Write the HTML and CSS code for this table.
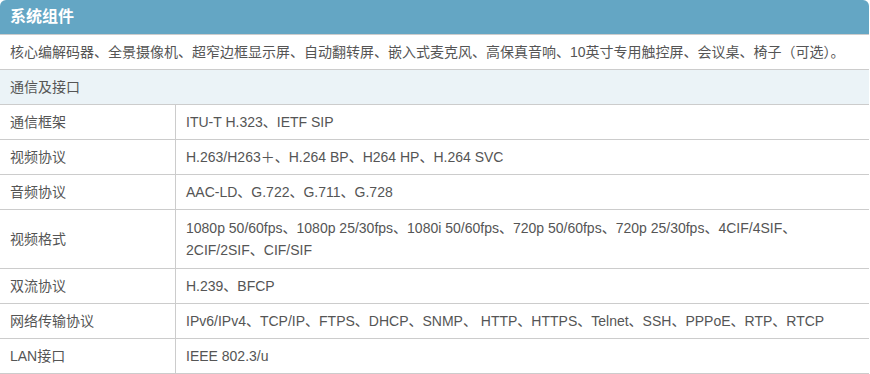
FILE: index.html
```html
<!DOCTYPE html>
<html lang="zh-CN">
<head>
<meta charset="utf-8">
<link rel="stylesheet" href="styles.css">
</head>
<body>
<div class="panel">
  <div class="panel-head">系统组件</div>
  <div class="summary">核心编解码器、全景摄像机、超窄边框显示屏、自动翻转屏、嵌入式麦克风、高保真音响、10英寸专用触控屏、会议桌、椅子（可选）。</div>
  <div class="section">通信及接口</div>
  <table class="spec">
    <tr><td class="k">通信框架</td><td class="v">ITU-T H.323、IETF SIP</td></tr>
    <tr><td class="k">视频协议</td><td class="v">H.263/H263＋、H.264 BP、H264 HP、H.264 SVC</td></tr>
    <tr><td class="k">音频协议</td><td class="v">AAC-LD、G.722、G.711、G.728</td></tr>
    <tr class="tall"><td class="k">视频格式</td><td class="v">1080p 50/60fps、1080p 25/30fps、1080i 50/60fps、720p 50/60fps、720p 25/30fps、4CIF/4SIF、<br>2CIF/2SIF、CIF/SIF</td></tr>
    <tr><td class="k">双流协议</td><td class="v">H.239、BFCP</td></tr>
    <tr><td class="k">网络传输协议</td><td class="v">IPv6/IPv4、TCP/IP、FTPS、DHCP、SNMP、 HTTP、HTTPS、Telnet、SSH、PPPoE、RTP、RTCP</td></tr>
    <tr><td class="k">LAN接口</td><td class="v">IEEE 802.3/u</td></tr>
  </table>
</div>
</body>
</html>
```
FILE: styles.css
```css
html, body {
  margin: 0;
  padding: 0;
  background: #ffffff;
}
body {
  font-family: "Liberation Sans", "Noto Sans CJK SC", sans-serif;
  font-size: 14px;
  color: #555555;
}
.panel {
  width: 869px;
}
.panel-head {
  height: 34px;
  line-height: 34px;
  background: #64a6c4;
  color: #ffffff;
  font-size: 16px;
  font-weight: bold;
  padding-left: 10px;
  border-radius: 6px 6px 0 0;
}
.summary {
  height: 34px;
  line-height: 34px;
  padding-left: 10px;
  border-top: 1px solid #cccccc;
  border-bottom: 1px solid #cccccc;
  white-space: nowrap;
}
.section {
  height: 34px;
  line-height: 34px;
  padding-left: 10px;
  background: #ebf3f7;
  border-bottom: 1px solid #cccccc;
}
.spec {
  width: 100%;
  border-collapse: collapse;
}
.spec td {
  border-bottom: 1px solid #cccccc;
  height: 34px;
  padding: 0 10px;
  line-height: 22px;
  vertical-align: middle;
}
.spec td.k {
  width: 155px;
  border-right: 1px solid #cccccc;
}
.spec td.v {
  padding-left: 10px;
}
.spec tr.tall td {
  height: 58px;
}
```
